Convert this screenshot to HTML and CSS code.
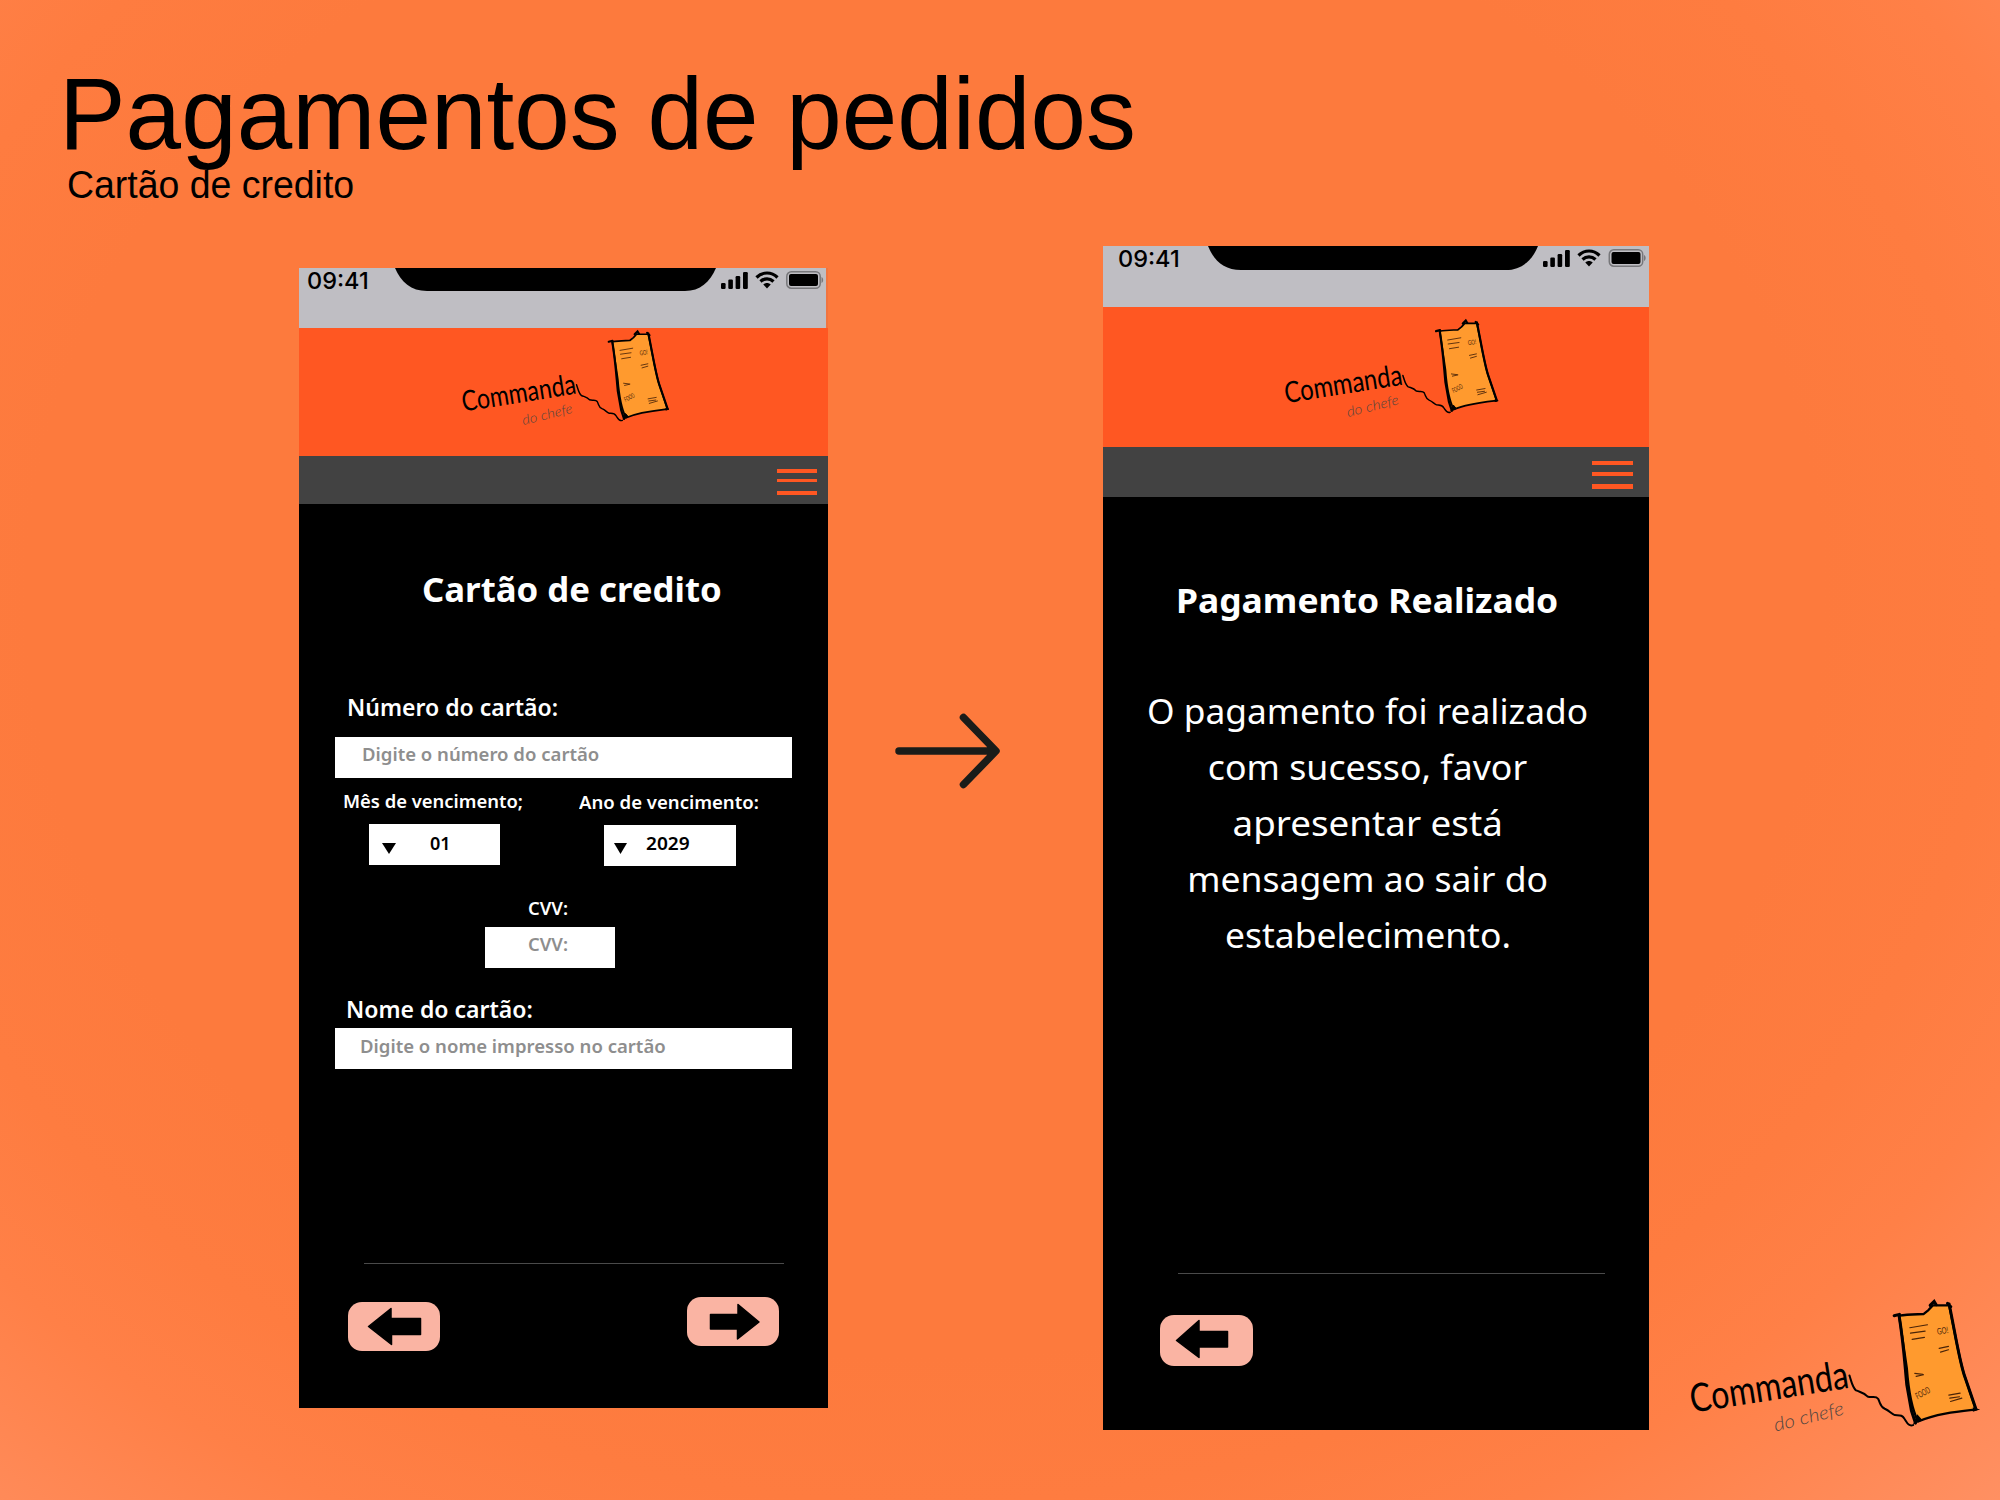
FILE: index.html
```html
<!DOCTYPE html>
<html lang="pt-BR">
<head>
<meta charset="utf-8">
<title>Pagamentos de pedidos</title>
<link rel="stylesheet" href="styles.css">
</head>
<body>
<svg class="sprite" aria-hidden="true">
  <symbol id="logo" viewBox="50 50 880 400">
    <path d="M683 103C710 98 735 99 756 98L771 86 784 72 833 72C850 150 862 230 878 280L913 384C860 390 795 396 740 420C722 385 712 340 706 260Z" fill="#ff9a2e" stroke="#000" stroke-width="7" stroke-linejoin="round"/>
    <path d="M668 103L684 99M683 103C697 190 700 250 706 310L720 388 732 425M833 68C850 150 862 230 878 280L913 382M776 72L788 60 794 70M828 66L838 76" fill="none" stroke="#000" stroke-width="9" stroke-linecap="round"/>
    <path d="M738 402L728 426 750 416ZM906 380L919 384 906 388Z" fill="#000" stroke="#000" stroke-width="4"/>
    <path d="M534 282C540 300 543 318 554 327C568 333 577 333 588 345C602 350 613 342 620 352C628 368 626 376 640 382C655 388 660 398 670 401C685 402 692 400 699 412C707 424 712 436 725 431" fill="none" stroke="#000" stroke-width="6" stroke-linecap="round"/>
    <path d="M715 139L768 130M717 155L761 149M722 174L759 168M803 201L831 195M807 212L831 205M730 276L754 279M734 285L756 280M832 341L866 335M835 350L864 346M837 360L871 350" fill="none" stroke="#4a2408" stroke-width="3.500" stroke-linecap="round"/>
    <text class="logo-word" transform="translate(62 394) rotate(-9)" textLength="480" lengthAdjust="spacingAndGlyphs">Commanda</text>
    <text class="logo-tag" transform="translate(312 450) rotate(-14)" textLength="215" lengthAdjust="spacingAndGlyphs">do chefe</text>
    <text class="logo-note" transform="translate(798 160) rotate(-9)" textLength="34" lengthAdjust="spacingAndGlyphs">GO!</text>
    <text class="logo-note" transform="translate(738 354) rotate(-28)" textLength="46" lengthAdjust="spacingAndGlyphs">FOOD</text>
  </symbol>
  <symbol id="signal" viewBox="0 0 27 17">
    <rect x="0" y="11" width="4.6" height="6" rx="1.2"/><rect x="7.3" y="7.5" width="4.6" height="9.5" rx="1.2"/><rect x="14.6" y="4" width="4.6" height="13" rx="1.2"/><rect x="22" y="0" width="4.8" height="17" rx="1.2"/>
  </symbol>
  <symbol id="wifi" viewBox="0 0 24 18">
    <path d="M1.5 6.5C7.5.5 16.500.5 22.500 6.500M5.500 10.500C9.300 6.900 14.700 6.900 18.500 10.500" fill="none" stroke="#000" stroke-width="3.200"/><path d="M8.300 13.600C10.500 11.600 13.500 11.600 15.700 13.600L12 17.500Z"/>
  </symbol>
  <symbol id="battery" viewBox="0 0 38 18">
    <rect x=".8" y=".8" width="33.400" height="16.400" rx="4.500" fill="none" stroke="#77777a" stroke-width="1.500"/><rect x="3" y="3" width="29" height="12" rx="2"/><path d="M35.500 6v6c2.200-1.200 2.200-4.800 0-6z" fill="#77777a"/>
  </symbol>
</svg>

<header class="heading">
  <h1><span class="fit t-heading">Pagamentos de pedidos</span></h1>
  <p><span class="fit t-sub">Cartão de credito</span></p>
</header>

<main class="stage">
  <section class="phone phone-card">
    <div class="status">
      <span class="clock">09:41</span><span class="notch"></span>
      <svg class="signal"><use href="#signal"/></svg><svg class="wifi"><use href="#wifi"/></svg><svg class="battery"><use href="#battery"/></svg>
    </div>
    <div class="brand"><svg class="logo"><use href="#logo"/></svg></div>
    <nav class="bar"><div class="menu"><i></i><i></i><i></i></div></nav>
    <form class="screen">
      <h2><span class="fit t-card">Cartão de credito</span></h2>
      <label class="large number-label"><span class="fit">Número do cartão:</span></label>
      <div class="field number-field"><span class="fit t-number-hint">Digite o número do cartão</span></div>
      <div class="expiry">
        <div class="month">
          <label><span class="fit t-month">Mês de vencimento;</span></label>
          <div class="select"><b class="caret"></b><span>01</span></div>
        </div>
        <div class="year">
          <label><span class="fit t-year">Ano de vencimento:</span></label>
          <div class="select"><b class="caret"></b><span class="fit t-2029">2029</span></div>
        </div>
      </div>
      <div class="cvv">
        <label><span class="fit t-cvv">CVV:</span></label>
        <div class="field"><span class="fit t-cvv">CVV:</span></div>
      </div>
      <label class="large name-label"><span class="fit">Nome do cartão:</span></label>
      <div class="field name-field"><span class="fit t-name-hint">Digite o nome impresso no cartão</span></div>
      <hr>
      <div class="actions">
        <a class="button back"><svg viewBox="0 0 92 48.500"><path d="M20.500 24.500L43 6.500V16.500H72.500V32.500H43.500V42.500Z"/></svg></a>
        <a class="button next"><svg viewBox="0 0 92 48.500"><path d="M72 25L51 7.500V17.500H23.500V32H50.500V42Z"/></svg></a>
      </div>
    </form>
  </section>

  <svg class="flow-arrow" viewBox="0 0 106 76"><path d="M4 38H100M68.500 4.500L101 38 68.500 71.500"/></svg>

  <section class="phone phone-done">
    <div class="status">
      <span class="clock">09:41</span><span class="notch"></span>
      <svg class="signal"><use href="#signal"/></svg><svg class="wifi"><use href="#wifi"/></svg><svg class="battery"><use href="#battery"/></svg>
    </div>
    <div class="brand"><svg class="logo"><use href="#logo"/></svg></div>
    <nav class="bar"><div class="menu"><i></i><i></i><i></i></div></nav>
    <div class="screen">
      <h2><span class="fit t-done">Pagamento Realizado</span></h2>
      <p class="message"><span class="fit line-1">O pagamento foi realizado</span><span class="fit line-2">com sucesso, favor</span><span class="fit line-3">apresentar está</span><span class="fit line-4">mensagem ao sair do</span><span class="fit line-5">estabelecimento.</span></p>
      <hr>
      <div class="actions">
        <a class="button back"><svg viewBox="0 0 93 51"><path d="M16.500 25.500L39 5.500V16.500H67.500V32H39V42.500Z"/></svg></a>
      </div>
    </div>
  </section>
</main>

<svg class="logo corner-logo"><use href="#logo"/></svg>
</body>
</html>
```
FILE: styles.css
```css
* { box-sizing: border-box; }
body {
  margin: 0;
  width: 2000px;
  height: 1500px;
  overflow: hidden;
  position: relative;
  background: radial-gradient(ellipse 1340px 1130px at 925px 600px, #fd7a3d 0%, #fd7a3d 67%, #fe7c40 80%, #ff8047 91%, #ff9062 113%);
  font-family: "Noto Sans", sans-serif;
  color: #000;
}
.sprite { display: block; width: 0; height: 0; position: absolute; }
.fit { display: inline-block; white-space: nowrap; transform-origin: left center; }
.heading { height: 246px; padding: 55px 0 0 59px; font-family: "Liberation Sans", Arial, sans-serif; }
h1, h2, p { margin: 0; }
h1 { font-size: 102px; line-height: 118px; font-weight: 400; height: 108px; }
.heading p { font-size: 38px; line-height: 44px; padding-left: 8px; }
.t-heading { transform: scaleX(.979); }
.t-sub { transform: scaleX(.985); }

.stage { display: flex; align-items: flex-start; padding-left: 299px; }
.phone { background: #000; display: flex; flex-direction: column; }
.phone-card { width: 529px; height: 1140px; margin-top: 22px; }
.phone-done { width: 546px; height: 1184px; margin-left: 102px; }
.flow-arrow { width: 106px; height: 76px; margin: 467px 0 0 67px; fill: none; stroke: #1a1c19; stroke-width: 7.500; stroke-linecap: round; stroke-linejoin: round; }

.status { display: flex; align-items: flex-start; background: #bfbec3; height: 60px; flex: none; }
.clock { font: 550 23.500px/23px Inter, sans-serif; width: 62px; white-space: nowrap; }
.notch { background: #000; clip-path: path("M0 0H321C315 14 305 23 290 23H32C16 23 6 14 0 0Z"); }
.phone-card .status { padding-left: 8px; border-right: 2px solid #f0743f; }
.phone-card .clock { margin-top: 1px; }
.phone-card .notch { width: 321px; height: 23px; margin-left: 26px; }
.signal { width: 27px; height: 17px; margin: 4px 0 0 5px; }
.wifi { width: 24px; height: 18px; margin: 3px 0 0 7px; }
.battery { width: 38px; height: 18px; margin: 3px 0 0 7px; }
.brand { background: #ff5722; flex: none; }
.phone-card .brand { height: 128px; padding: 1px 0 0 161px; }
.bar { background: #424242; height: 48px; flex: none; display: flex; justify-content: flex-end; }
.menu { width: 40px; display: flex; flex-direction: column; }
.menu i { height: 4px; background: #ff5722; margin-bottom: 6px; }
.menu i + i { margin-bottom: 9px; }
.phone-card .menu { margin: 13px 11px 0 0; }

.logo { display: block; }
.phone-card .logo { width: 212px; height: 96px; }
.logo-word { font: 400 118px Lato, sans-serif; }
.logo-tag { font: italic 300 56px Lato, sans-serif; fill: #4f4540; }
.logo-note { font: 400 27px Lato, sans-serif; fill: #4a2408; }

.screen { display: flex; flex-direction: column; align-items: flex-start; color: #fff; }
h2 { font-size: 34px; line-height: 40px; font-weight: 700; }
label { display: block; font-size: 18px; line-height: 24px; font-weight: 600; }
.large { font-size: 23px; line-height: 30px; }
.field, .select { background: #fff; height: 41px; font-size: 18px; font-weight: 600; color: #8e8e8e; }
.select { color: #000; display: flex; width: 131px; }
.t-card { transform: scaleX(1.022); }
.t-number-hint, .t-name-hint { transform: scaleX(1.03); }
.t-month { transform: scaleX(1.022); }
.t-year { transform: scaleX(1.03); }
.t-2029 { transform: scaleX(1.06); }
.t-cvv { transform: scaleX(1.02); }
.t-done { transform: scaleX(1.042); }
.phone-card h2 { margin: 65px 0 0 123px; }
.number-label { margin: 83px 0 0 48px; }
.number-field { width: 457px; margin: 15px 0 0 36px; padding-left: 27px; line-height: 34px; }
.expiry { display: flex; margin-top: 11px; height: 77px; }
.month { padding-left: 44px; width: 280px; }
.month .select { margin: 11px 0 0 26px; line-height: 38px; }
.year { padding-top: 1px; }
.year .select { margin: 11px 0 0 25px; line-height: 36px; width: 132px; }
.caret { width: 14px; height: 11px; background: #000; clip-path: polygon(0 0, 100% 0, 50% 100%); margin: 19px 34px 0 13px; flex: none; }
.year .caret { margin: 18px 19px 0 10px; width: 13px; }
.cvv { margin: 30px 0 0 186px; }
.cvv label { padding-left: 43px; }
.cvv .field { width: 130px; margin-top: 7px; padding-left: 43px; line-height: 35px; }
.name-label { margin: 26px 0 0 47px; }
.name-field { width: 457px; margin: 4px 0 0 36px; padding-left: 25px; line-height: 36px; }
hr { border: 0; background: #4a4a4a; height: 1px; }
.phone-card hr { width: 420px; margin: 194px 0 0 65px; }
.actions { display: flex; align-items: flex-start; }
.button { display: block; background: #fab4a3; border-radius: 14px; }
.button svg { display: block; width: 100%; height: 100%; stroke: #000; stroke-width: 1.500; stroke-linejoin: round; }
.phone-card .button { width: 92px; height: 48.500px; }
.phone-card .back { margin: 38px 0 0 49px; }
.phone-card .next { margin: 33px 0 0 247px; }

.phone-done .status { height: 61px; padding-left: 15px; }
.phone-done .clock { margin-top: 1px; }
.phone-done .notch { width: 330px; height: 24px; margin-left: 28px; clip-path: path("M0 0H330C324 15 313 24 298 24H33C16 24 6 15 0 0Z"); }
.phone-done .battery { width: 39px; }
.phone-done .brand { height: 140px; padding: 11px 0 0 180px; }
.phone-done .logo { width: 218px; height: 99px; }
.phone-done .bar { height: 50px; }
.phone-done .menu { width: 41px; margin: 14px 16px 0 0; }
.phone-done .menu i { height: 4.500px; margin-bottom: 6.500px; }
.phone-done .menu i + i { margin-bottom: 8.500px; }
.phone-done h2 { margin: 83px 0 0 73px; }
.message { width: 440px; margin: 63px 0 0 45px; font-size: 35px; line-height: 56px; display: flex; flex-direction: column; align-items: center; }
.message .fit { transform-origin: center; }
.line-1 { transform: scaleX(1.009); }
.line-2 { transform: scaleX(1.02); }
.line-3 { transform: scaleX(1.05); }
.line-4 { transform: scaleX(1.016); }
.line-5 { transform: scaleX(1.014); }
.phone-done hr { width: 427px; margin: 310px 0 0 75px; }
.phone-done .back { width: 93px; height: 51px; margin: 41px 0 0 57px; }

.corner-logo { position: absolute; left: 1687.500px; top: 1298px; width: 293.500px; height: 133.500px; }
```
